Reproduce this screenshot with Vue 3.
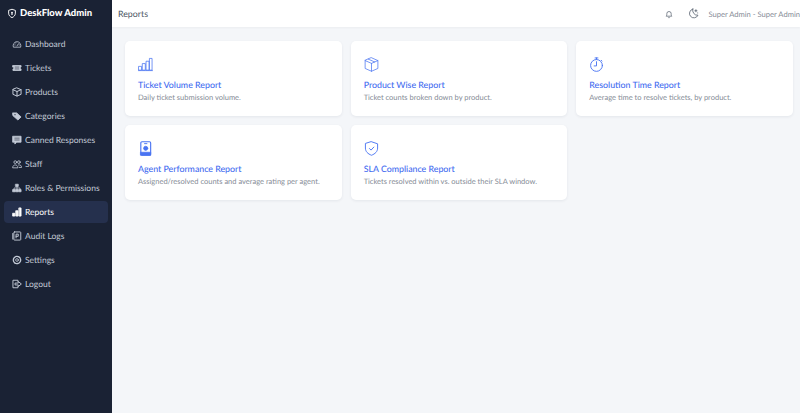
<template>
  <div class="layout">
    <aside class="sidebar">
      <div class="brand">
        <svg class="brand-icon" viewBox="0 0 16 16"><path d="M8 1.200 2.600 3v4.400c0 3.400 2.300 5.900 5.400 7.200 3.100-1.300 5.400-3.800 5.400-7.200V3z" fill="none" stroke="#fff" stroke-width="1.500"/><circle cx="8" cy="6.600" r="1.500" fill="#fff"/><path d="M7.300 7.500h1.400l.3 3H7z" fill="#fff"/></svg>
        <span>DeskFlow Admin</span>
      </div>
      <nav class="nav">
        <a v-for="item in navItems" :key="item.label" class="nav-item" :class="{ active: item.label === 'Reports' }">
          <svg class="nav-icon" viewBox="0 0 16 16" fill="none" stroke="currentColor" stroke-width="1.300" stroke-linecap="round" stroke-linejoin="round" v-html="item.icon"></svg>
          <span>{{ item.label }}</span>
        </a>
      </nav>
    </aside>
    <div class="main">
      <header class="topbar">
        <span class="page-title">Reports</span>
        <div class="top-actions">
          <svg class="top-icon" viewBox="0 0 16 16" fill="none" stroke="#4b5563" stroke-width="1.100" stroke-linejoin="round"><path d="M3.500 11.500c.8-1 1-1.800 1-4a3.500 3.500 0 0 1 7 0c0 2.200.2 3 1 4z"/><path d="M6.700 13.200a1.400 1.400 0 0 0 2.600 0"/></svg>
          <svg class="top-icon moon" viewBox="0 0 16 16" fill="none" stroke="#4b5563" stroke-width="1.100" stroke-linecap="round"><path d="M7 1.500a6.500 6.500 0 1 0 7.500 9A7 7 0 0 1 7 1.500z"/><path d="M11.500 2.500v3M10 4h3M14 7.200h.2" /></svg>
          <span class="user-name">Super Admin - Super Admin</span>
        </div>
      </header>
      <section class="content">
        <div class="report-grid">
          <div v-for="report in reports" :key="report.title" class="report-card">
            <svg class="report-icon" viewBox="0 0 16 16" fill="none" stroke="currentColor" stroke-width="0.800" stroke-linecap="round" stroke-linejoin="round" v-html="report.icon"></svg>
            <h5>{{ report.title }}</h5>
            <p>{{ report.text }}</p>
          </div>
        </div>
      </section>
    </div>
  </div>
</template>

<script setup>
const navItems = [
  { label: 'Dashboard', icon: '<path d="M2 12.500a6.300 6.300 0 1 1 12 0z"/><path d="M8 11l2.500-3.500"/><path d="M4.500 9.500h.5M11.300 9.500h.5M6 6.200h.3"/>' },
  { label: 'Tickets', icon: '<path d="M1.500 4h13v2.500a1.500 1.500 0 0 0 0 3V12h-13V9.500a1.500 1.500 0 0 0 0-3z" fill="currentColor"/><path d="M5 6.500h6M5 9.500h6" stroke="#1a2234" stroke-width=".9"/>' },
  { label: 'Products', icon: '<path d="M8 1.500 14.500 4.300v7.400L8 14.500 1.500 11.700V4.300z" stroke-width="1.600"/><path d="M1.500 4.300 8 7.200l6.500-2.900M8 7.200v7.300" stroke-width="1.600"/>' },
  { label: 'Categories', icon: '<path d="M1.500 3h6L14.500 9.500 9.500 14.500 1.500 7.500z" fill="currentColor"/><circle cx="4.800" cy="5.800" r=".9" fill="#1a2234" stroke="none"/>' },
  { label: 'Canned Responses', icon: '<path d="M1.500 2h13v9.500H7.500l-3 3v-3h-3z" fill="currentColor"/><path d="M4.500 5h7M4.500 8h7" stroke="#1a2234" stroke-width=".9"/>' },
  { label: 'Staff', icon: '<circle cx="5.200" cy="5" r="2.200"/><circle cx="11" cy="5" r="2.200"/><path d="M1 13.500c0-5.500 8.500-5.500 8.500 0zM10.500 9.500c3-.5 4.800 1 4.800 4h-3.500"/>' },
  { label: 'Roles & Permissions', icon: '<rect x="6" y="2" width="4" height="3.500" fill="currentColor"/><rect x="1.500" y="10.500" width="3.500" height="3.500" fill="currentColor"/><rect x="6.200" y="10.500" width="3.500" height="3.500" fill="currentColor"/><rect x="11" y="10.500" width="3.500" height="3.500" fill="currentColor"/><path d="M8 5.500v5M3.200 10.500V8h9.600v2.500"/>' },
  { label: 'Reports', icon: '<rect x="1.500" y="10" width="3" height="4.500" fill="currentColor"/><rect x="6.500" y="6" width="3" height="8.500" fill="currentColor"/><rect x="11.500" y="1.500" width="3" height="13" fill="currentColor"/>' },
  { label: 'Audit Logs', icon: '<rect x="3" y="1.500" width="11" height="13" rx="1" stroke-width="1.500"/><path d="M1.200 4v9" stroke-width="1.500"/><path d="M6.500 11V5h3.500v3.500H6.500" stroke-width="1.500"/>' },
  { label: 'Settings', icon: '<circle cx="8" cy="8" r="2.200"/><circle cx="8" cy="8" r="5.800" stroke-dasharray="2.500 1.200" stroke-width="2.200"/>' },
  { label: 'Logout', icon: '<path d="M9.500 4V2H1.500v12h8v-2" stroke-width="1.500"/><path d="M5.500 6.500h4.500V4L15 8l-5 4V9.500H5.500z" stroke-width="1.500"/>' }
]

const reports = [
  {
    title: 'Ticket Volume Report',
    text: 'Daily ticket submission volume.',
    icon: '<rect x="1" y="10" width="2.800" height="4"/><rect x="5" y="7" width="2.800" height="7"/><rect x="9" y="4.500" width="2.800" height="9.500"/><rect x="12.600" y="1.500" width="2.400" height="12.500"/><path d="M.5 14.500h15"/>'
  },
  {
    title: 'Product Wise Report',
    text: 'Ticket counts broken down by product.',
    icon: '<path d="M8 .8 14.800 3.800v8.400L8 15.200 1.200 12.200V3.800z"/><path d="M1.200 3.800 8 6.800l6.800-3M8 6.800v8.400M4.600 2.300l6.800 3"/>'
  },
  {
    title: 'Resolution Time Report',
    text: 'Average time to resolve tickets, by product.',
    icon: '<circle cx="8" cy="9" r="6.300" stroke-width="1"/><path d="M8 1v1.500M6.500 1h3M8 5v4.500H5.500M13 3.500l.8.8" stroke-width="1"/>'
  },
  {
    title: 'Agent Performance Report',
    text: 'Assigned/resolved counts and average rating per agent.',
    icon: '<rect x="3" y=".8" width="10.500" height="14.400" rx="1.200" stroke-width="1.200"/><path d="M7 2.800h2.500" stroke-width="1"/><circle cx="8.200" cy="7.800" r="2.200" fill="currentColor"/><path d="M3 12h10.500v3.200H3z" fill="currentColor"/>'
  },
  {
    title: 'SLA Compliance Report',
    text: 'Tickets resolved within vs. outside their SLA window.',
    icon: '<path d="M8 .8 14.500 3v4.500c0 3.800-2.600 6.200-6.500 7.700-3.900-1.500-6.500-3.900-6.500-7.700V3z" stroke-width="1"/><path d="M5.800 8 7.500 9.700 10.500 6.500" stroke-width="1"/>'
  }
]
</script>

<style>
html, body {
  margin: 0;
  background: #f4f6f9;
}
</style>

<style scoped>
.layout {
  display: flex;
  height: 413px;
  overflow: hidden;
  font-family: Lato, "Liberation Sans", sans-serif;
  text-rendering: geometricPrecision;
}

.sidebar {
  width: 112px;
  flex-shrink: 0;
  background: #1a2234;
  color: #fff;
}

.brand {
  display: flex;
  align-items: center;
  gap: 3px;
  height: 27px;
  padding-left: 7px;
  font-size: 9.500px;
  font-weight: 900;
  white-space: nowrap;
}

.brand-icon {
  width: 10px;
  height: 11px;
}

.nav {
  display: flex;
  flex-direction: column;
  gap: 2px;
  padding: 6px 4px;
}

.nav-item {
  display: flex;
  align-items: center;
  gap: 3px;
  height: 22px;
  padding-left: 8px;
  border-radius: 4px;
  color: #c3cad6;
  font-size: 8.500px;
  white-space: nowrap;
}

.nav-item.active {
  background: #25304d;
  color: #fff;
}

.nav-icon {
  width: 10px;
  height: 10px;
  flex-shrink: 0;
}

.main {
  flex: 1;
  min-width: 0;
  display: flex;
  flex-direction: column;
}

.topbar {
  height: 27px;
  flex-shrink: 0;
  display: flex;
  align-items: center;
  justify-content: space-between;
  padding: 0 0 0 6px;
  background: #fff;
  box-shadow: 0 1px 2px rgba(0, 0, 0, 0.04);
}

.page-title {
  font-size: 8.800px;
  color: #4b5563;
}

.top-actions {
  display: flex;
  align-items: center;
}

.top-icon {
  width: 10px;
  height: 10px;
  margin-right: 14px;
}

.moon {
  width: 11px;
  height: 11px;
  margin-right: 9px;
}

.user-name {
  font-size: 7.600px;
  color: #858b96;
  white-space: nowrap;
}

.content {
  flex: 1;
  padding: 14px 7px 0 13px;
}

.report-grid {
  display: grid;
  grid-template-columns: repeat(3, 1fr);
  gap: 9px;
}

.report-card {
  height: 75px;
  box-sizing: border-box;
  padding: 16px 13px 0;
  background: #fff;
  border-radius: 5px;
  box-shadow: 0 1px 3px rgba(20, 30, 60, 0.07);
}

.report-icon {
  display: block;
  width: 15px;
  height: 15px;
  color: #4a74f2;
}

.report-card h5 {
  margin: 7px 0 0;
  font-size: 8.800px;
  line-height: 12px;
  font-weight: 500;
  color: #3f6bf0;
}

.report-card p {
  margin: 1px 0 0;
  font-size: 7.500px;
  line-height: 12px;
  color: #858b96;
}
</style>
